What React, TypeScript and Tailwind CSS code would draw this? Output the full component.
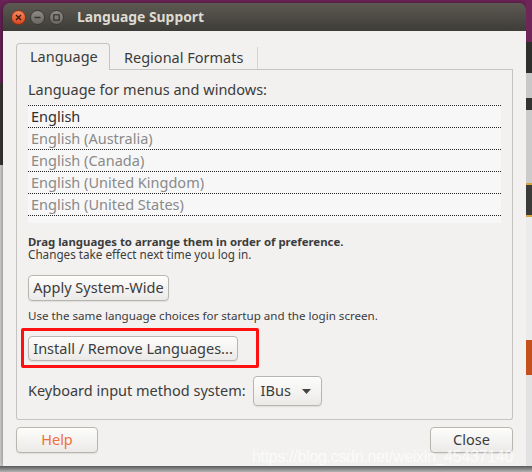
import React from 'react';

const languages = [
  'English',
  'English (Australia)',
  'English (Canada)',
  'English (United Kingdom)',
  'English (United States)',
];

const btn =
  'flex items-center justify-center rounded-[4px] border border-[#b9b6b0] bg-gradient-to-b from-[#fdfdfc] to-[#ebeae8] shadow-[0_1px_0_rgba(255,255,255,0.8)_inset,0_1px_1px_rgba(0,0,0,0.08)] text-[14.5px] text-[#3c3c3c]';

const WindowButton: React.FC<{ kind: 'close' | 'min' | 'max' }> = ({ kind }) => {
  if (kind === 'close') {
    return (
      <div className="w-[15px] h-[15px] rounded-full bg-gradient-to-b from-[#f7875a] to-[#d9471d] border border-[#8f2f14] flex items-center justify-center">
        <svg width="7" height="7" viewBox="0 0 7 7">
          <path d="M1 1L6 6M6 1L1 6" stroke="#3a1a10" strokeWidth="1.3" />
        </svg>
      </div>
    );
  }
  return (
    <div className="w-[15px] h-[15px] rounded-full bg-gradient-to-b from-[#8e8b84] to-[#6a6760] border border-[#3b3a36] flex items-center justify-center">
      {kind === 'min' ? (
        <svg width="7" height="7" viewBox="0 0 7 7">
          <path d="M0.5 3.5H6.5" stroke="#34332f" strokeWidth="1.3" />
        </svg>
      ) : (
        <svg width="7" height="7" viewBox="0 0 7 7">
          <rect x="0.8" y="0.8" width="5.4" height="5.4" fill="none" stroke="#34332f" strokeWidth="1.2" />
        </svg>
      )}
    </div>
  );
};

const App: React.FC = () => {
  return (
    <div className="relative w-[532px] h-[472px] overflow-hidden flex flex-col bg-[#9d9d9d] font-['Noto_Sans',sans-serif]">
      <div className="flex h-[466px]">
        {/* desktop behind, left edge */}
        <div className="w-[3px] flex flex-col">
          <div className="h-[83px] bg-[#6a2457]" />
          <div className="h-[82px] bg-[#3b3a37]" />
          <div className="flex-1 bg-[#dcdcdc]" />
        </div>

        {/* window */}
        <div className="w-[523px] flex flex-col bg-[#6f2558] pt-[3px]">
          <div className="flex-1 flex flex-col rounded-t-[7px] overflow-hidden shadow-[0_1px_6px_rgba(0,0,0,0.55)]">
            {/* title bar */}
            <div className="h-[28px] flex items-center bg-gradient-to-b from-[#5d5a53] to-[#3e3c37] pl-[8px]">
              <div className="flex gap-[4px]">
                <WindowButton kind="close" />
                <WindowButton kind="min" />
                <WindowButton kind="max" />
              </div>
              <span className="ml-[13px] text-[13.9px] font-bold text-[#dfdbd2]">Language Support</span>
            </div>

            {/* body */}
            <div className="flex-1 flex flex-col bg-[#f2f1f0] px-[13px] pt-[12px] pb-[13px]">
              {/* tabs */}
              <div className="flex h-[27px]">
                <div className="w-[94px] flex items-center pl-[13px] border border-b-0 border-[#c6c4c0] rounded-t-[4px] text-[14.5px] text-[#3c3c3c]">
                  Language
                </div>
                <div className="flex-1 flex border-b border-[#c6c4c0]">
                  <div className="w-[148px] flex items-center pl-[14px] mt-[4px] border-r border-[#d6d4d0] text-[14.5px] text-[#3c3c3c]">
                    Regional Formats
                  </div>
                </div>
              </div>

              {/* frame */}
              <div className="flex flex-col border border-t-0 border-[#c6c4c0] rounded-b-[3px] px-[11px] pt-[10px] pb-[13px]">
                <div className="h-[20px] flex items-center text-[14.5px] text-[#3c3c3c]">
                  Language for menus and windows:
                </div>

                <div className="mt-[4px] bg-[#f7f7f7] pt-[1px] pb-[7px]">
                  {languages.map((lang, i) => (
                    <div
                      key={lang}
                      className={
                        'h-[22px] flex items-center pl-[3px] border-t border-dotted border-[#222] text-[14.5px] ' +
                        (i === 0 ? 'text-[#2e2e2e]' : 'text-[#8a8a8a]') +
                        (i === languages.length - 1 ? ' h-[23px] border-b' : '')
                      }
                    >
                      {lang}
                    </div>
                  ))}
                </div>

                <div className="mt-[12px] text-[11.7px] leading-[13px] text-[#3c3c3c]">
                  <div className="font-bold text-[11.4px]">Drag languages to arrange them in order of preference.</div>
                  <div>Changes take effect next time you log in.</div>
                </div>

                <div className="mt-[14px] flex">
                  <button className={btn + ' w-[141px] h-[26px]'}>Apply System-Wide</button>
                </div>

                <div className="mt-[8px] text-[11.6px] leading-[13px] text-[#3c3c3c]">
                  Use the same language choices for startup and the login screen.
                </div>

                {/* annotation box */}
                <div className="mt-[6px] ml-[-7px] w-[238px] h-[40px] border-[3px] border-[#ff1010] rounded-[2px] pl-[4px] pt-[5px]">
                  <button className={btn + ' w-[210px] h-[25px]'}>Install / Remove Languages...</button>
                </div>

                <div className="mt-[8px] flex items-center h-[30px] text-[14.5px] text-[#3c3c3c]">
                  <span>Keyboard input method system:</span>
                  <button className={btn + ' ml-[7px] w-[69px] h-[30px] justify-start pl-[7px]'}>
                    <span>IBus</span>
                    <svg className="ml-[11px]" width="9" height="5" viewBox="0 0 9 5">
                      <path d="M0 0H9L4.5 5Z" fill="#444" />
                    </svg>
                  </button>
                </div>
              </div>

              {/* dialog buttons */}
              <div className="mt-[7px] flex justify-between">
                <button className={btn + ' w-[82px] h-[26px] text-[#f0703c]'}>Help</button>
                <button className={btn + ' w-[83px] h-[26px]'}>Close</button>
              </div>
            </div>
          </div>
        </div>

        {/* desktop behind, right edge */}
        <div className="w-[6px] flex flex-col">
          <div className="h-[42px] bg-[#6f2558]" />
          <div className="h-[31px] bg-[#2e2e2d]" />
          <div className="h-[25px] bg-[#c8c8c8]" />
          <div className="h-[12px] bg-[#333331]" />
          <div className="h-[73px] bg-[#cbcbcb]" />
          <div className="h-[34px] bg-[#3b3b3a] border-y-2 border-[#d6a63e]" />
          <div className="h-[123px] bg-[#ebebeb]" />
          <div className="h-[35px] bg-[#c4501d]" />
          <div className="flex-1 bg-[#e2e2e2]" />
        </div>
      </div>
      <div className="flex-1 bg-gradient-to-b from-[#5a5a5a] to-[#b4b4b4]" />

      {/* watermark */}
      <div className="absolute right-[19px] top-[445px] text-[16px] tracking-[-0.3px] text-white/70 font-['Liberation_Sans',sans-serif]">
        https://blog.csdn.net/weixin_45437140
      </div>
    </div>
  );
};

export default App;
